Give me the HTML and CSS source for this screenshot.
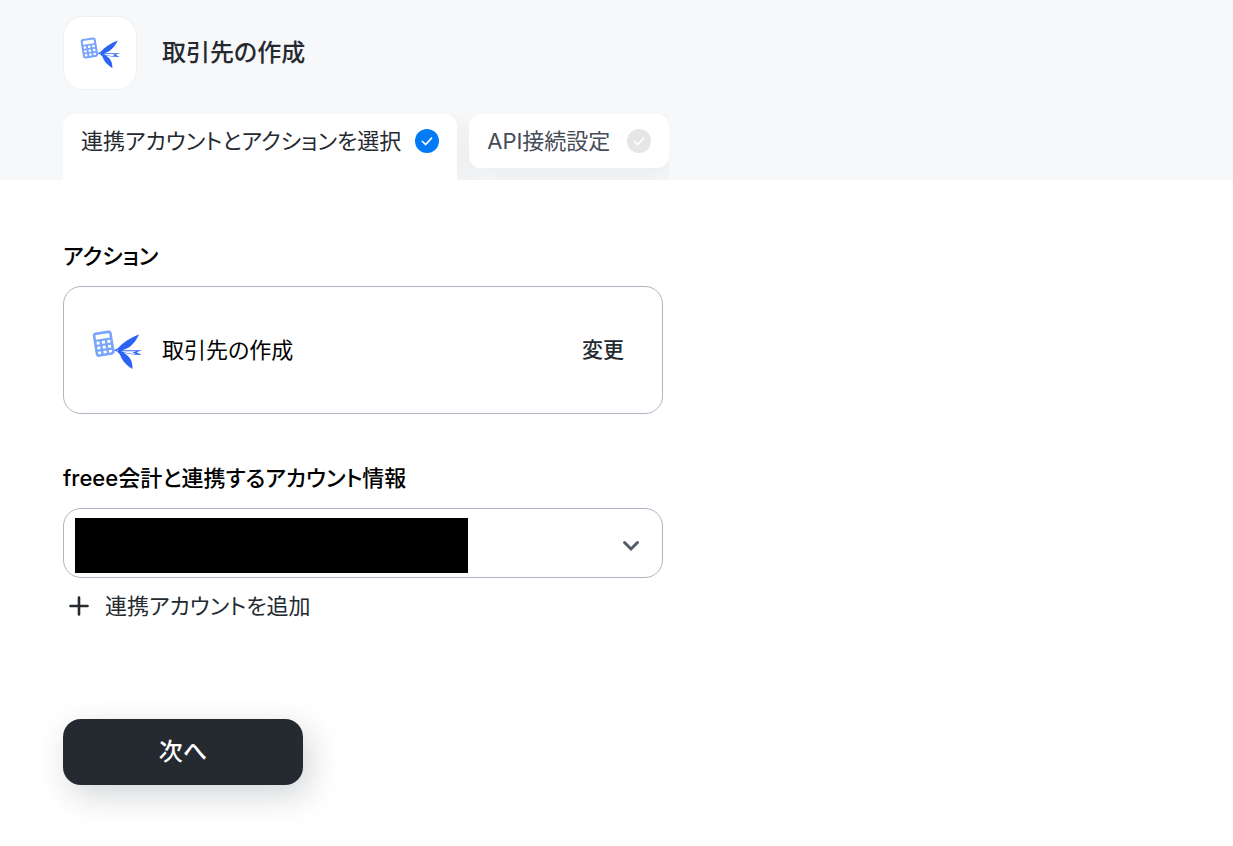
FILE: index.html
```html
<!DOCTYPE html>
<html lang="ja">
<head>
<meta charset="utf-8">
<title>取引先の作成</title>
<link rel="stylesheet" href="styles.css">
</head>
<body>
<svg class="sprite" aria-hidden="true">
  <symbol id="swallow" viewBox="0 0 50 40">
    <g transform="rotate(-9 11 14)" fill="none" stroke="#78a5fb">
      <rect x="3.500" y="2.800" width="16.500" height="22" rx="2" stroke-width="2.600"/>
      <path d="M3.500 9.800h16.500M3.500 14.800h16.500M3.500 19.800h16.500" stroke-width="2.200"/>
      <path d="M9 9.800v15M14.500 9.800v15" stroke-width="2.400"/>
    </g>
    <path fill="#2b64f5" d="M21.500 20.200 25.500 18.600C31 12.500 38 8 47 4.300 44.500 11 38.500 18.500 30 20.300L50 20.200 44.500 22.200 49.500 25C42 24.800 36 24 32 22.800L36 26C39.500 29.500 40.500 33 40.500 39 34 35 30 30.500 28 24.500L25 21.600Z"/>
    <path fill="#fff" d="M29 21.200 44.500 21.200 40.500 22.400 44 23.900C37.500 23.700 32.500 22.800 29 21.200Z"/>
    <circle cx="25.500" cy="20.200" r=".6" fill="#fff"/>
  </symbol>
</svg>

<header class="header">
  <div class="title-row">
    <span class="app-icon"><svg class="app-glyph" aria-hidden="true"><use href="#swallow"/></svg></span>
    <h1 class="title">取引先の作成</h1>
  </div>
  <nav class="tabs">
    <button type="button" class="tab tab-active" aria-current="step">
      <span>連携アカウントとアクションを選択</span>
      <svg class="check" viewBox="0 0 24 24" aria-hidden="true"><circle cx="12" cy="12" r="12" fill="#007af5"/><path d="m7 12 3.600 3.600 6.400-7"/></svg>
    </button>
    <button type="button" class="tab">
      <span>API接続設定</span>
      <svg class="check" viewBox="0 0 24 24" aria-hidden="true"><circle cx="12" cy="12" r="12" fill="#e6e6e6"/><path d="m7 12 3.600 3.600 6.400-7"/></svg>
    </button>
  </nav>
</header>

<main class="content">
  <section class="group">
    <h2 class="label">アクション</h2>
    <div class="action-card">
      <svg class="action-glyph" aria-hidden="true"><use href="#swallow"/></svg>
      <span class="action-name">取引先の作成</span>
      <button type="button" class="text-button">変更</button>
    </div>
  </section>

  <section class="group">
    <label class="label" for="account">freee会計と連携するアカウント情報</label>
    <div class="select-box">
      <select id="account" class="select"><option value=""></option></select>
      <span class="redaction"></span>
      <svg class="chevron" viewBox="0 0 18 12" aria-hidden="true"><path d="m2.500 2.500 6.500 6.500 6.500-6.500"/></svg>
    </div>
    <button type="button" class="add-button">
      <svg class="plus" viewBox="0 0 20 20" aria-hidden="true"><path d="M10 1.500v17M1.500 10h17"/></svg>
      <span>連携アカウントを追加</span>
    </button>
  </section>

  <button type="button" class="next-button">次へ</button>
</main>
</body>
</html>
```

FILE: styles.css
```css
* {
  box-sizing: border-box;
}

body {
  margin: 0;
  background: #fff;
  color: #000;
  font: 400 22px/32px Inter, "Noto Sans CJK JP", sans-serif;
  font-feature-settings: "palt";
}

button,
select {
  margin: 0;
  padding: 0;
  border: 0;
  background: none;
  color: #252a31;
  font: inherit;
  font-feature-settings: inherit;
  cursor: pointer;
}

.sprite {
  display: none;
}

.header {
  padding: 16px 63px 0;
  background: #f7f8fa;
}

.title-row {
  display: flex;
  align-items: center;
  gap: 25px;
}

.app-icon {
  display: grid;
  place-items: center;
  width: 74px;
  height: 74px;
  border: 1px solid #f0f1f3;
  border-radius: 20px;
  background: #fff;
}

.app-glyph {
  width: 40px;
  height: 32px;
}

.title {
  margin: 0;
  color: #252a31;
  font-size: 24px;
  font-weight: 500;
}

.tabs {
  display: flex;
  align-items: flex-start;
  gap: 12px;
  width: fit-content;
  margin-top: 24px;
  overflow: hidden;
}

.tab {
  display: flex;
  align-items: center;
  justify-content: space-between;
  gap: 14px;
  min-width: 200px;
  padding: 11px 18px;
  border-radius: 12px;
  background: #fff;
  box-shadow: 6px 10px 32px rgba(46, 46, 40, 0.06);
  color: #454b57;
}

.tab-active {
  padding-bottom: 23px;
  border-radius: 12px 12px 0 0;
  color: #252a31;
}

.check {
  width: 24px;
  height: 24px;
}

.check path {
  fill: none;
  stroke: #fff;
  stroke-width: 1.6;
}

.content {
  display: flex;
  flex-direction: column;
  align-items: flex-start;
  gap: 48px;
  padding: 60px 63px;
}

.group {
  display: flex;
  flex-direction: column;
  align-items: flex-start;
  width: 100%;
  max-width: 600px;
}

.label {
  margin: 0 0 14px;
  font-size: 22px;
  font-weight: 500;
}

.action-card {
  display: flex;
  align-items: center;
  gap: 20px;
  width: 100%;
  padding: 43px 38px 43px 28px;
  border: 1px solid #adb6c2;
  border-radius: 18px;
}

.action-glyph {
  width: 50px;
  height: 40px;
}

.action-name {
  flex: 1;
}

.text-button {
  font-size: 21px;
  font-weight: 500;
}

.select-box {
  position: relative;
  width: 100%;
}

.select {
  display: block;
  width: 100%;
  height: 70px;
  padding: 0 56px 0 12px;
  border: 1px solid #adb6c2;
  border-radius: 18px;
  appearance: none;
}

.redaction {
  position: absolute;
  top: 10px;
  bottom: 5px;
  left: 12px;
  width: 393px;
  background: #000;
  pointer-events: none;
}

.chevron {
  position: absolute;
  top: 32px;
  right: 23px;
  width: 18px;
  height: 12px;
  fill: none;
  stroke: #535d69;
  stroke-width: 3;
  stroke-linecap: round;
  pointer-events: none;
}

.add-button {
  display: flex;
  align-items: center;
  gap: 16px;
  margin: 12px 0 0 6px;
}

.plus {
  width: 20px;
  height: 20px;
  fill: none;
  stroke: #252a31;
  stroke-width: 2.600;
  stroke-linecap: round;
}

.next-button {
  width: 240px;
  margin-top: 49px;
  padding: 17px;
  border-radius: 18px;
  background: #252a31;
  box-shadow: 6px 10px 32px rgba(30, 42, 52, 0.2);
  color: #fff;
  font-size: 24px;
  font-weight: 500;
}
```
